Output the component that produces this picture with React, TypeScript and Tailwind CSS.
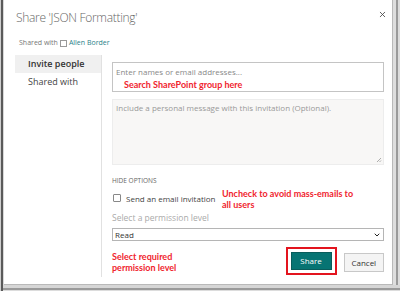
import { ChevronDown, X } from 'lucide-react';

const font = { fontFamily: '"Open Sans", "Noto Sans", sans-serif' };
const note = { fontFamily: 'Lato, "Open Sans", sans-serif' };

export default function App() {
  return (
    <div className="w-[400px] h-[291px] bg-[#dcdcdc] flex" style={font}>
      {/* window edge */}
      <div className="w-[1px] bg-[#cfcfcf]" />
      <div className="w-[2px] bg-[#5a5a5a]" />
      <div className="flex flex-col flex-1">
        <div className="flex h-[285px]">
          <div className="w-[1px] bg-[#d8d8d8]" />
          <div className="w-[389px] bg-white border-r border-b border-[#b9b9b9] flex flex-col relative">
            <X className="absolute right-[5px] top-[10px] w-[9px] h-[9px] text-[#444]" strokeWidth={2.2} />

            <div className="pl-[12px] pt-[9px] text-[12px] font-light text-[#666] leading-[18px] tracking-[-0.3px]">
              Share 'JSON Formatting'
            </div>

            <div className="pl-[15px] pt-[11px] flex items-center text-[7px] text-[#777] leading-[10px]">
              Shared with
              <span className="inline-block w-[7px] h-[7px] border border-[#999] mx-[2px]" />
              <span className="text-[#2a7f8a]">Allen Border</span>
            </div>

            <div className="flex flex-1 pt-[7px]">
              {/* nav */}
              <div className="ml-[11px] w-[87px] border-r border-[#e1e1e1] mb-[7px] flex flex-col">
                <div className="h-[18px] bg-[#f0f0f0] pl-[13px] text-[9px] font-semibold text-[#333] leading-[18px]">
                  Invite people
                </div>
                <div className="pl-[13px] pt-[3px] text-[9px] text-[#444] leading-[12px]">Shared with</div>
              </div>

              {/* content */}
              <div className="ml-[10px] w-[272px] flex flex-col pt-[7px]">
                <div className="h-[30px] border border-[#c4c4c4] pl-[3px] pt-[3px]">
                  <div className="text-[8px] text-[#888] leading-[11px]">Enter names or email addresses...</div>
                  <div className="pl-[8px] pt-[2px] text-[9px] font-bold text-[#f0242e] leading-[12px]" style={note}>
                    Search SharePoint group here
                  </div>
                </div>

                <div className="mt-[7px] h-[66px] bg-[#f8f7f6] border border-[#ededed] pl-[3px] pt-[2px] relative">
                  <div className="text-[8px] text-[#999] leading-[11px]">
                    Include a personal message with this invitation (Optional).
                  </div>
                  <svg className="absolute right-[1px] bottom-[1px]" width="6" height="6" viewBox="0 0 6 6">
                    <path d="M5 1 L1 5 M5 3.5 L3.5 5" stroke="#999" strokeWidth="0.8" />
                  </svg>
                </div>

                <div className="pt-[11px] text-[6.5px] text-[#666] leading-[9px]">HIDE OPTIONS</div>

                <div className="flex h-[27px]">
                  <div className="w-[110px] flex items-start pt-[9px]">
                    <span className="w-[8px] h-[8px] border border-[#888] rounded-[1px] ml-[1px] bg-white shrink-0" />
                    <span className="ml-[5px] text-[8px] text-[#444] leading-[9px] whitespace-nowrap">Send an email invitation</span>
                  </div>
                  <div className="pt-[3px] text-[9px] font-bold text-[#f0242e] leading-[11px]" style={note}>
                    Uncheck to avoid mass-emails to
                    <br />
                    all users
                  </div>
                </div>

                <div className="text-[8.5px] text-[#aaa] leading-[12px]">Select a permission level</div>

                <div className="mt-[4px] h-[13px] border border-[#b5b5b5] flex items-center justify-between pl-[2px] pr-[2px]">
                  <span className="text-[8px] text-[#333] leading-[11px]">Read</span>
                  <ChevronDown className="w-[8px] h-[8px] text-[#222]" strokeWidth={3} />
                </div>

                <div className="flex pt-[8px]">
                  <div className="w-[176px] pt-[2px] text-[9px] font-bold text-[#f0242e] leading-[11px]" style={note}>
                    Select required
                    <br />
                    permission level
                  </div>
                  <div className="border-2 border-[#e3141e] p-[3px] h-[28px] mt-[-2px]">
                    <div className="w-[41px] h-[18px] bg-[#077473] border border-[#0a5c5b] text-white text-[8px] flex items-center justify-center">
                      Share
                    </div>
                  </div>
                  <div className="ml-[7px] mt-[4px] w-[41px] h-[19px] bg-[#f4f4f4] border border-[#c8c8c8] text-[8px] text-[#333] flex items-center justify-center">
                    Cancel
                  </div>
                </div>
              </div>
            </div>
          </div>
          <div className="w-[3px] bg-[#dedede]" />
          <div className="w-[2px] bg-[#9a9a9a]" />
        </div>
        <div className="h-[3px] bg-[#d6d6d6]" />
        <div className="h-[2px] bg-[#9a9a9a]" />
      </div>
    </div>
  );
}
